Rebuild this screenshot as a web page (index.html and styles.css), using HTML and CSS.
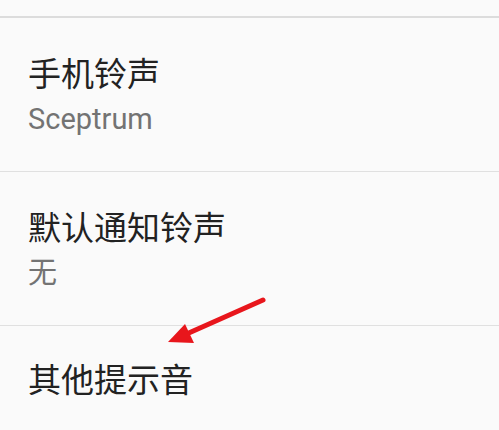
FILE: index.html
```html
<!DOCTYPE html>
<html lang="zh">
<head>
<meta charset="utf-8">
<link rel="stylesheet" href="styles.css">
</head>
<body>
<div class="page">
  <div class="top-gap"></div>
  <div class="item item-two">
    <div class="title">手机铃声</div>
    <div class="summary">Sceptrum</div>
  </div>
  <div class="item item-two">
    <div class="title">默认通知铃声</div>
    <div class="summary">无</div>
  </div>
  <div class="item item-one">
    <div class="title">其他提示音</div>
  </div>
  <svg class="arrow" width="499" height="430" viewBox="0 0 499 430">
    <line x1="263" y1="300" x2="182" y2="336" stroke="#e8161c" stroke-width="5" stroke-linecap="round"/>
    <polygon points="168,342 185,324 194,343" fill="#e8161c"/>
  </svg>
</div>
</body>
</html>
```
FILE: styles.css
```css
html, body {
  margin: 0;
  padding: 0;
  background: #fafafa;
}
.page {
  position: relative;
  width: 499px;
  height: 430px;
  overflow: hidden;
  font-family: "Roboto", "Noto Sans CJK SC", sans-serif;
}
.top-gap {
  height: 16px;
  border-bottom: 2px solid #dcdcdc;
}
.item {
  display: flex;
  flex-direction: column;
  justify-content: center;
  padding-left: 28px;
  border-bottom: 1px solid #e0e0e0;
  box-sizing: border-box;
}
.item-two {
  height: 154px;
  padding-top: 3px;
  gap: 6px;
}
.item-one {
  height: 111px;
}
.title {
  font-size: 33px;
  line-height: 40px;
  color: #222222;
}
.summary {
  font-size: 29px;
  line-height: 36px;
  color: #737373;
}
.arrow {
  position: absolute;
  left: 0;
  top: 0;
}
```
